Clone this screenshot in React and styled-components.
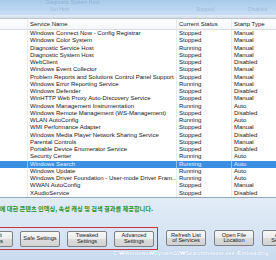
import styled, { createGlobalStyle } from "styled-components";

const Global = createGlobalStyle`
    html, body {
        margin: 0;
        padding: 0;
        background: #fff;
        overflow: hidden;
    }
`;

const Window = styled.div`
    width: 276px;
    height: 260px;
    overflow: hidden;
    display: flex;
    flex-direction: column;
    font-family: "Liberation Sans", Arial, sans-serif;
`;

const Glass = styled.div`
    height: 15px;
    flex: none;
    background: linear-gradient(180deg, #a9c9ea 0%, #bcd6f1 60%, #c8ddf3 100%);
    position: relative;
    overflow: hidden;
`;

const Ghost = styled.span`
    position: absolute;
    left: ${props => props.$x}px;
    top: ${props => props.$y}px;
    font-size: 5px;
    color: rgba(70, 105, 150, 0.28);
    filter: blur(0.7px);
    white-space: nowrap;
`;

const Strip = styled.div`
    height: 4px;
    flex: none;
    background: linear-gradient(180deg, #e4edf6, #d2dce8);
    border-bottom: 1px solid #b9c6d4;
    box-sizing: border-box;
`;

const Grid = styled.div`
    display: grid;
    grid-template-columns: 27px 149px 55px 1fr;
    height: ${props => props.$h}px;
    line-height: ${props => props.$h}px;
    font-size: 6px;
    white-space: nowrap;
    background: ${props => (props.$sel ? "#3a8fe3" : "transparent")};
    color: ${props => (props.$sel ? "#e8f2ff" : "#151515")};
`;

const Cell = styled.div`
    overflow: hidden;
    padding-left: 2px;
    border-left: 1px solid ${props => (props.$sel ? "#8ec0f0" : "#ececec")};
    &:first-child {
        border-left: none;
    }
`;

const Header = styled(Grid)`
    flex: none;
    background: linear-gradient(180deg, #ffffff, #f4f6f9);
    border-bottom: 1px solid #d8dde4;
    box-sizing: border-box;
    color: #222;
`;

const List = styled.div`
    flex: none;
    background: #fff;
    border-bottom: 1px solid #8fa6bf;
`;

const Panel = styled.div`
    flex: 1;
    background: linear-gradient(180deg, #e2ecf7 0%, #d6e4f3 60%, #c9dbef 100%);
    display: flex;
    flex-direction: column;
    overflow: hidden;
`;

const Desc = styled.div`
    margin-top: 7px;
    margin-left: -6px;
    height: 8px;
    line-height: 8px;
    font-family: "Noto Sans CJK KR", sans-serif;
    font-size: 6.2px;
    font-weight: 700;
    color: #279227;
    white-space: nowrap;
`;

const ButtonRow = styled.div`
    margin-top: 14px;
    margin-left: -31px;
    display: flex;
    align-items: center;
    gap: 8px;
`;

const RedBox = styled.div`
    display: flex;
    gap: 7px;
    padding: 3px 3px 2px 3px;
    border: 1px solid #c8333d;
    flex: none;
`;

const Button = styled.div`
    width: 40px;
    height: 16px;
    flex: none;
    box-sizing: border-box;
    border: 1px solid #7b7f86;
    border-radius: 2px;
    background: linear-gradient(180deg, #f7f7f7 0%, #ececec 50%, #dcdcdc 51%, #d2d2d2 100%);
    display: flex;
    align-items: center;
    justify-content: center;
    text-align: center;
    font-size: 5.6px;
    line-height: 5.4px;
    color: #1b1b1b;
    white-space: nowrap;
`;

const Path = styled.div`
    margin-left: 113px;
    height: 6px;
    line-height: 6px;
    font-size: 5.6px;
    font-weight: 700;
    color: #ffffff;
    text-shadow: 0 0 1px #7fa6d3;
    white-space: nowrap;
`;

const ROW = 7.25;

const services = [
    ["Windows Connect Now - Config Registrar", "Stopped", "Manual"],
    ["Windows Color System", "Stopped", "Manual"],
    ["Diagnostic Service Host", "Running", "Manual"],
    ["Diagnostic System Host", "Stopped", "Manual"],
    ["WebClient", "Stopped", "Disabled"],
    ["Windows Event Collector", "Stopped", "Manual"],
    ["Problem Reports and Solutions Control Panel Support", "Stopped", "Manual"],
    ["Windows Error Reporting Service", "Running", "Manual"],
    ["Windows Defender", "Stopped", "Disabled"],
    ["WinHTTP Web Proxy Auto-Discovery Service", "Stopped", "Manual"],
    ["Windows Management Instrumentation", "Running", "Auto"],
    ["Windows Remote Management (WS-Management)", "Stopped", "Disabled"],
    ["WLAN AutoConfig", "Running", "Auto"],
    ["WMI Performance Adapter", "Stopped", "Manual"],
    ["Windows Media Player Network Sharing Service", "Stopped", "Disabled"],
    ["Parental Controls", "Stopped", "Manual"],
    ["Portable Device Enumerator Service", "Stopped", "Disabled"],
    ["Security Center", "Running", "Auto"],
    ["Windows Search", "Running", "Auto"],
    ["Windows Update", "Running", "Auto"],
    ["Windows Driver Foundation - User-mode Driver Fram...", "Running", "Auto"],
    ["WWAN AutoConfig", "Stopped", "Manual"],
    ["XAudioService", "Stopped", "Disabled"],
];

const Label = ({ lines }) => (
    <span>
        {lines.map((l, i) => (
            <span key={i}>
                {l}
                {i < lines.length - 1 && <br />}
            </span>
        ))}
    </span>
);

export default function App() {
    return (
        <>
            <Global />
            <Window>
                <Glass>
                    <Ghost $x={46} $y={-1}>Diagnostic System Host</Ghost>
                    <Ghost $x={50} $y={6}>Net Host</Ghost>
                    <Ghost $x={196} $y={6}>Stopped</Ghost>
                    <Ghost $x={248} $y={6}>Disabled</Ghost>
                </Glass>
                <Strip />
                <Header $h={11}>
                    <Cell />
                    <Cell>Service Name</Cell>
                    <Cell>Current Status</Cell>
                    <Cell>Startp Type</Cell>
                </Header>
                <List>
                    {services.map(([name, status, type]) => {
                        const sel = name === "Windows Search";
                        return (
                            <Grid key={name} $h={ROW} $sel={sel}>
                                <Cell $sel={sel} />
                                <Cell $sel={sel}>{name}</Cell>
                                <Cell $sel={sel}>{status}</Cell>
                                <Cell $sel={sel}>{type}</Cell>
                            </Grid>
                        );
                    })}
                </List>
                <Panel>
                    <Desc>츠에 대한 콘텐츠 인덱싱, 속성 캐싱 및 검색 결과를 제공합니다.</Desc>
                    <ButtonRow>
                        <RedBox>
                            <Button><Label lines={["Default", "Settings"]} /></Button>
                            <Button><Label lines={["Safe Settings"]} /></Button>
                            <Button><Label lines={["Tweaked", "Settings"]} /></Button>
                            <Button><Label lines={["Advanced", "Settings"]} /></Button>
                        </RedBox>
                        <Button><Label lines={["Refresh List", "of Services"]} /></Button>
                        <Button><Label lines={["Open File", "Location"]} /></Button>
                        <Button><Label lines={["About", "Services"]} /></Button>
                    </ButtonRow>
                    <Path>C:₩Windows₩System32₩SearchIndexer.exe /Embedding</Path>
                </Panel>
            </Window>
        </>
    );
}
